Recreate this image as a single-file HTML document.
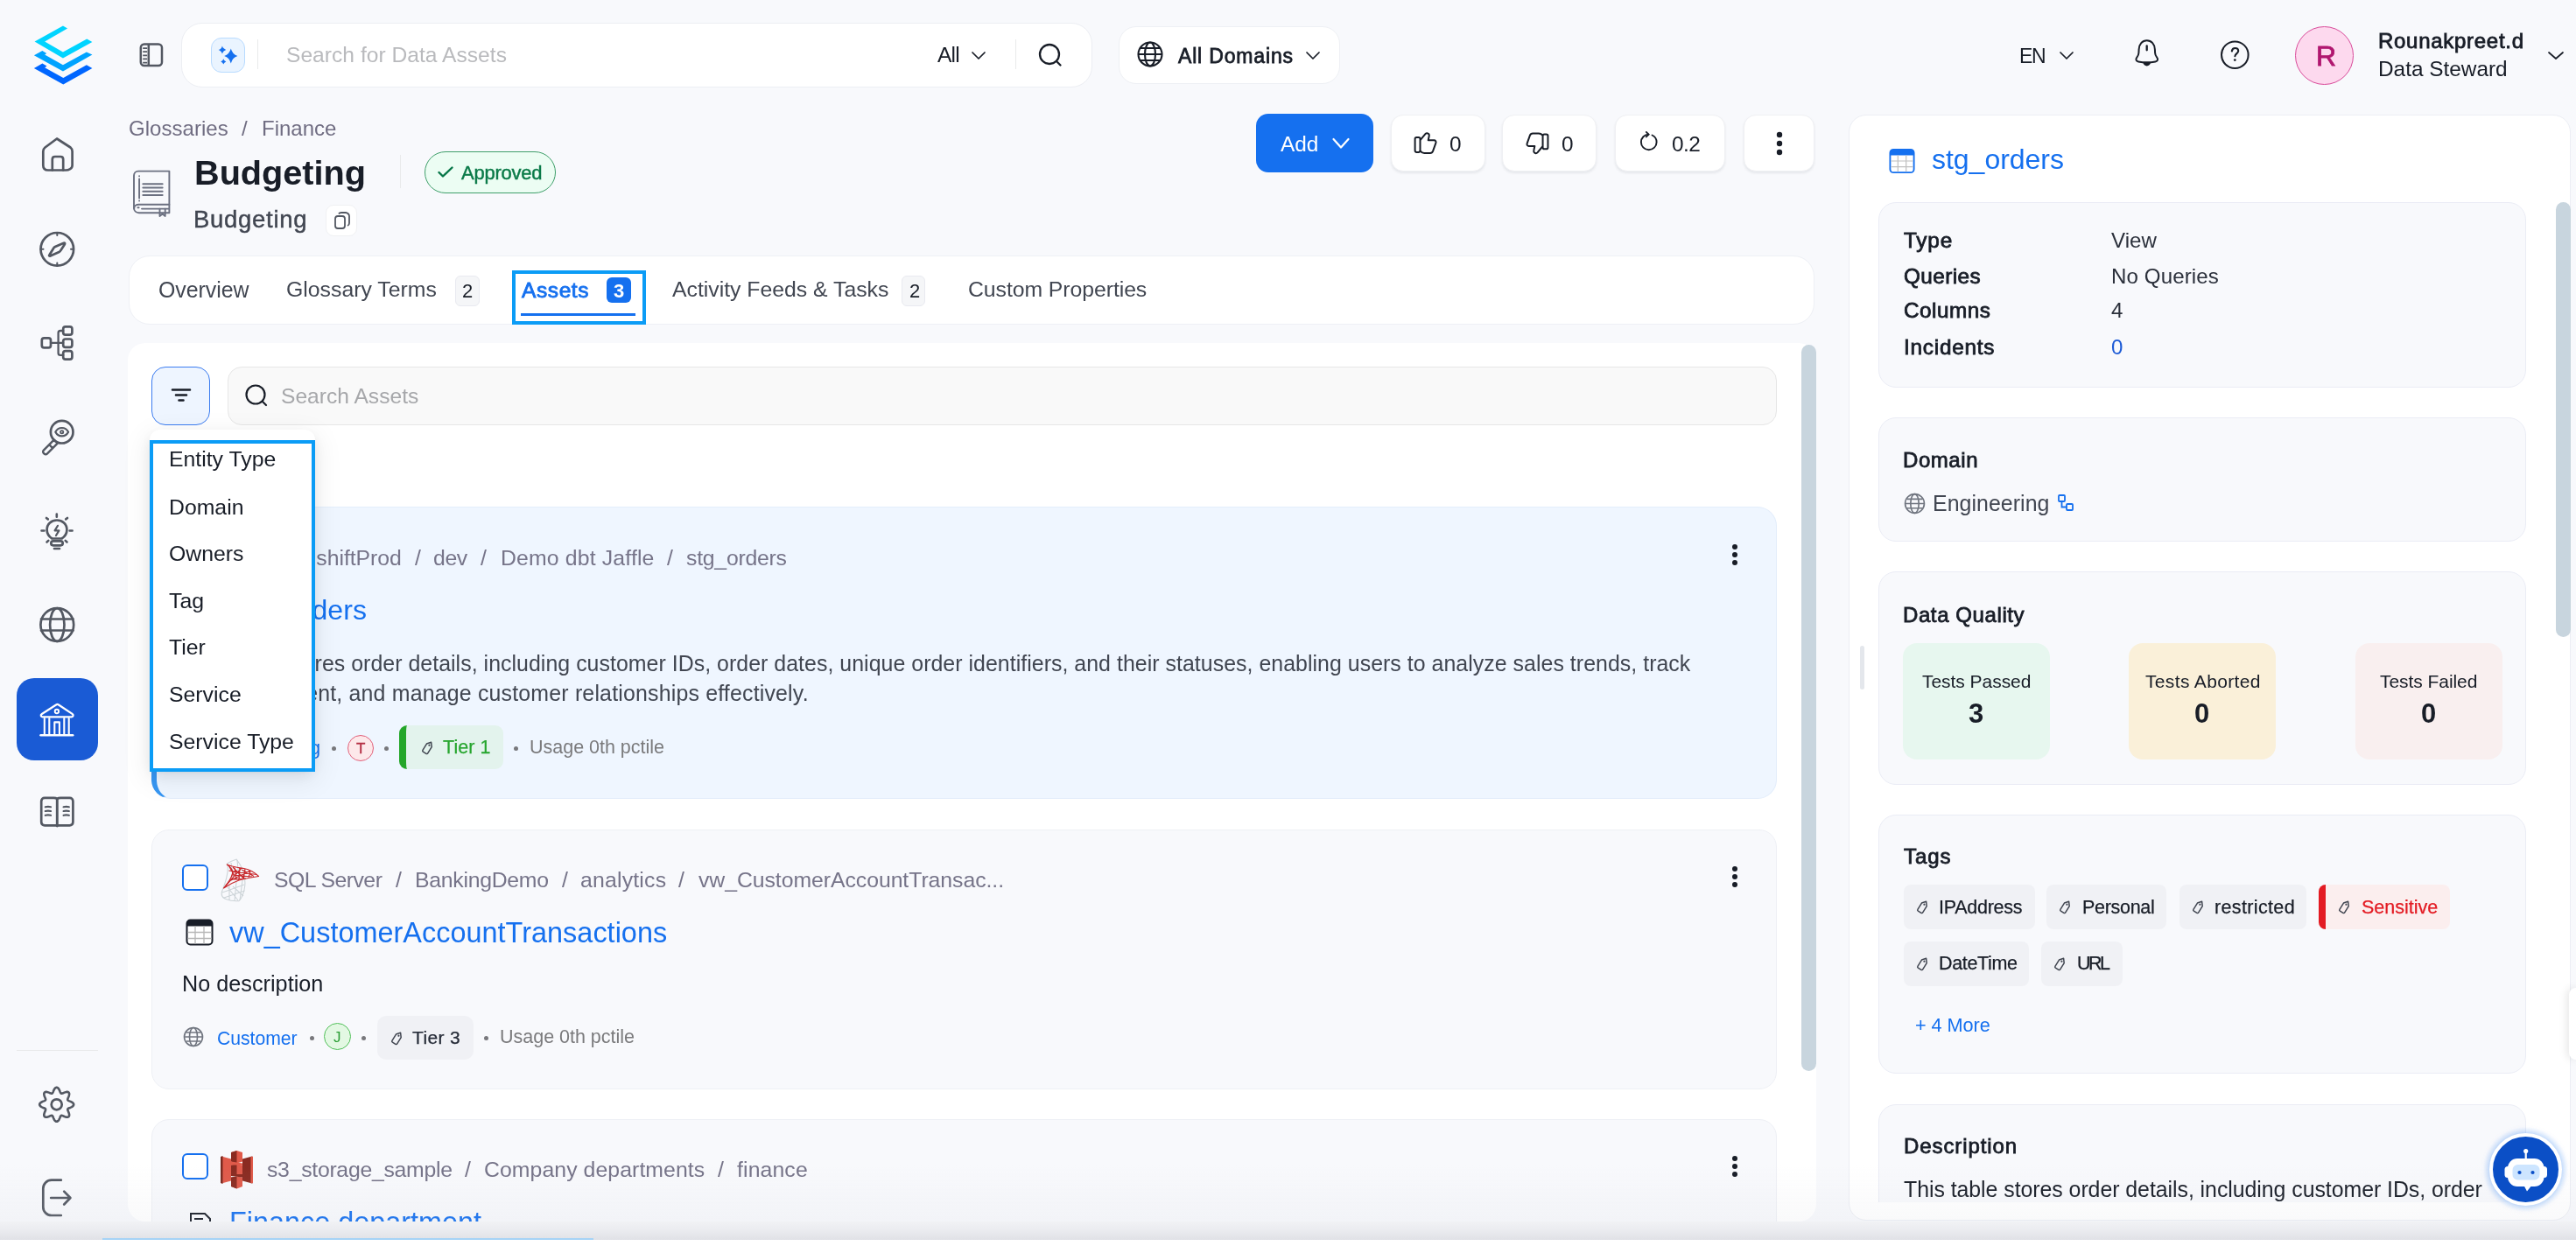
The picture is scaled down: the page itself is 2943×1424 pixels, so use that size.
<!DOCTYPE html>
<html><head><meta charset="utf-8"><title>Budgeting - Glossary</title>
<style>
*{box-sizing:border-box;margin:0;padding:0;}
html,body{width:2943px;height:1424px;overflow:hidden;background:#f8f9fc;font-family:"Liberation Sans",sans-serif;}
.t{position:absolute;white-space:nowrap;will-change:transform;}
.r{position:absolute;}
.s{position:absolute;overflow:visible;}
.clip{position:absolute;overflow:hidden;}
</style></head><body>
<svg class="s" style="left:30px;top:20px;" width="85" height="85" viewBox="30 20 85 85" fill="none">
<path d="M71.95 29.55 L77.07 32.4 L51.15 47.6 L71.95 59.56 L99.24 44.56 L105.4 47.97 L71.95 66.4 L39.55 47.6 Z" fill="#00d4ff"/>
<path d="M38.87 63.3 L48.4 57.9 L53.2 60.9 L51.15 62.6 L71.95 74.2 L98.9 59.56 L105.4 62.6 L71.95 81.4 Z" fill="#00a3ff"/>
<path d="M38.87 78 L48.4 72.5 L53.5 75.6 L51.15 77.3 L72.3 88.9 L98.9 74.2 L105.4 78 L72.3 96.4 Z" fill="#0066ff"/>
</svg>
<svg class="s" style="left:150px;top:40px;" width="45" height="45" viewBox="150 40 45 45" fill="none"><rect x="160.8" y="50.5" width="24.2" height="24.6" rx="4" stroke="#535862" stroke-width="2.5"/><path d="M169.8 50.5 V75" stroke="#535862" stroke-width="2.5"/><path d="M163.2 55.1h5M163.2 59.2h5M163.2 63.3h5M163.2 67.4h5M163.2 71.6h5" stroke="#535862" stroke-width="1.7"/></svg>
<div class="r" style="left:207px;top:26px;width:1041px;height:74px;background:#fff;border:1px solid #eceef3;border-radius:24px;"></div>
<div class="r" style="left:241px;top:43px;width:39px;height:40px;background:#eaf4ff;border:1px solid #b8dbff;border-radius:12px;"></div>
<svg class="s" style="left:245px;top:48px;" width="32" height="30" viewBox="245 48 32 30" fill="none"><path d="M263.8 55.6 Q265.47 62.15 271.40000000000003 64.0 Q265.47 65.85 263.8 72.4 Q262.13 65.85 256.2 64.0 Q262.13 62.15 263.8 55.6Z M253.9 52.4 Q254.85 55.99 258.2 57.0 Q254.85 58.01 253.9 61.6 Q252.95 58.01 249.6 57.0 Q252.95 55.99 253.9 52.4Z M255.3 67.2 Q255.96 69.70 258.3 70.4 Q255.96 71.10 255.3 73.60000000000001 Q254.64 71.10 252.3 70.4 Q254.64 69.70 255.3 67.2Z" fill="#1570ef"/></svg>
<div class="r" style="left:294px;top:45px;width:1px;height:34px;background:#e9eaeb;"></div>
<div class="t" style="left:327.00px;top:51.37px;font-size:24.60px;line-height:24.60px;font-weight:400;color:#b9babd;letter-spacing:0.020px;">Search for Data Assets</div>
<div class="t" style="left:1071.30px;top:51.37px;font-size:24.60px;line-height:24.60px;font-weight:400;color:#181d27;letter-spacing:-0.815px;">All</div>
<svg class="s" style="left:1108px;top:55px;" width="20" height="16" viewBox="0 0 20 16" fill="none"><path d="M3 5 L10.0 12 L17 5" stroke="#181d27" stroke-width="1.7" stroke-linecap="round" stroke-linejoin="round"/></svg>
<div class="r" style="left:1160px;top:45px;width:1px;height:34px;background:#e9eaeb;"></div>
<svg class="s" style="left:1186px;top:49px;" width="30" height="30" viewBox="0 0 30 30" fill="none"><circle cx="13" cy="13" r="11" stroke="#181d27" stroke-width="2.3"/><path d="M22 22 L25.5 25.5" stroke="#181d27" stroke-width="2.3" stroke-linecap="round"/></svg>
<div class="r" style="left:1278px;top:30px;width:253px;height:66px;background:#fff;border:1px solid #eef0f4;border-radius:20px;"></div>
<svg class="s" style="left:1298px;top:46px;" width="32" height="32" viewBox="0 0 32 32" fill="none"><g stroke="#181d27" stroke-width="2.1"><circle cx="16" cy="16" r="13.5"/><ellipse cx="16" cy="16" rx="6" ry="13.5"/><path d="M2.5 16h27M4.5 9h23M4.5 23h23"/></g></svg>
<div class="t" style="left:1346.00px;top:52.73px;font-size:23.00px;line-height:23.00px;font-weight:400;color:#181d27;letter-spacing:0.830px;-webkit-text-stroke:0.78px #181d27;">All Domains</div>
<svg class="s" style="left:1490px;top:55px;" width="20" height="16" viewBox="0 0 20 16" fill="none"><path d="M3 5 L10.0 12 L17 5" stroke="#181d27" stroke-width="1.7" stroke-linecap="round" stroke-linejoin="round"/></svg>
<div class="t" style="left:2307.00px;top:52.73px;font-size:23.00px;line-height:23.00px;font-weight:400;color:#181d27;letter-spacing:-1.447px;">EN</div>
<svg class="s" style="left:2351px;top:55px;" width="20" height="16" viewBox="0 0 20 16" fill="none"><path d="M3 5 L10.0 12 L17 5" stroke="#181d27" stroke-width="1.7" stroke-linecap="round" stroke-linejoin="round"/></svg>
<svg class="s" style="left:2430px;top:40px;" width="45" height="45" viewBox="2430 40 45 45" fill="none"><g stroke="#181d27" stroke-width="2" stroke-linejoin="round" stroke-linecap="round"><path d="M2452.7 46.3 C2447.5 46.3 2443.8 50.5 2443.6 56.5 L2443.4 60.5 C2443.3 62.5 2442.6 64 2441.3 65.6 C2439.5 67.8 2440.5 70 2443 70.4 C2449.5 71.6 2456 71.6 2462.5 70.4 C2465 70 2466 67.8 2464.2 65.6 C2462.9 64 2462.2 62.5 2462.1 60.5 L2461.9 56.5 C2461.7 50.5 2458 46.3 2452.7 46.3Z"/><path d="M2452.7 52.5 V57.3" stroke-width="2.3"/></g><path d="M2448.2 71.6 C2448.8 74 2450.5 75.4 2452.7 75.4 C2454.9 75.4 2456.6 74 2457.2 71.6Z" fill="#181d27"/></svg>
<svg class="s" style="left:2530px;top:40px;" width="48" height="48" viewBox="2530 40 48 48" fill="none"><circle cx="2553.3" cy="62.7" r="15.3" stroke="#181d27" stroke-width="2"/><path d="M2549.8 58.5 C2550.2 56 2551.8 55 2553.5 55 C2555.6 55 2557.2 56.3 2557.2 58.3 C2557.2 60.8 2553.6 61.4 2553.4 64.2" stroke="#181d27" stroke-width="2.1" stroke-linecap="round"/><circle cx="2553.3" cy="68.6" r="1.4" fill="#181d27"/></svg>
<div class="r" style="left:2622px;top:30px;width:67px;height:67px;background:#fdd9ee;border:1.5px solid #d94b9a;border-radius:50%;"></div>
<div class="t" style="left:2646.00px;top:48.31px;font-size:32.00px;line-height:32.00px;font-weight:400;color:#b0176f;letter-spacing:-3.000px;-webkit-text-stroke:0.8px #b0176f;">R</div>
<div class="t" style="left:2717.00px;top:34.88px;font-size:24.00px;line-height:24.00px;font-weight:400;color:#181d27;letter-spacing:0.713px;-webkit-text-stroke:0.82px #181d27;">Rounakpreet.d</div>
<div class="t" style="left:2717.00px;top:66.64px;font-size:24.40px;line-height:24.40px;font-weight:400;color:#181d27;letter-spacing:-0.013px;">Data Steward</div>
<svg class="s" style="left:2909px;top:55px;" width="22" height="16" viewBox="0 0 22 16" fill="none"><path d="M3 5 L11.0 12 L19 5" stroke="#181d27" stroke-width="1.7" stroke-linecap="round" stroke-linejoin="round"/></svg>
<svg class="s" style="left:40px;top:150px;" width="50" height="52" viewBox="40 150 50 52" fill="none"><g stroke="#535862" stroke-width="2.7" stroke-linecap="round" stroke-linejoin="round"><path d="M65 158.5 L51.5 168.5 C50 169.7 49.3 171 49.3 173 V189 C49.3 192.6 51.5 194.5 55 194.5 H75 C78.5 194.5 82.6 192.6 82.6 189 V173 C82.6 171 82 169.7 80.5 168.5 Z"/><path d="M59.8 194.5 V182 C59.8 180 60.8 179 62.8 179 H69.2 C71.2 179 72.2 180 72.2 182 V194.5"/></g></svg>
<svg class="s" style="left:40px;top:260px;" width="50" height="50" viewBox="40 260 50 50" fill="none"><g stroke="#535862" stroke-width="2.7" stroke-linecap="round" stroke-linejoin="round"><circle cx="65.3" cy="284.8" r="18.8"/><path d="M56.5 291.3 C55.5 292 56.5 293 57.5 292.5 L67.5 288 C68.5 287.5 69 287 69.5 286 L74 279 C74.5 278 73.7 277.3 72.8 277.8 L63 282 C62 282.5 61.5 283 61 284 Z"/><path d="M65.3 266v3 M65.3 300.5v3 M46.5 284.8h3 M81 284.8h3" stroke-width="2"/></g></svg>
<svg class="s" style="left:40px;top:365px;" width="50" height="52" viewBox="40 365 50 52" fill="none"><g stroke="#535862" stroke-width="2.7" stroke-linecap="round" stroke-linejoin="round"><rect x="47.8" y="386.3" width="10.2" height="11" rx="2.6"/><rect x="72.2" y="373.3" width="10.2" height="9.4" rx="2.6"/><rect x="72.2" y="387.5" width="10.2" height="9.4" rx="2.6"/><rect x="72.2" y="401.2" width="10.2" height="9.4" rx="2.6"/><path d="M58 391.8 H72.2 M72.2 378 H69 C67.5 378 66.6 379 66.6 380.5 V403.5 C66.6 405 67.5 405.9 69 405.9 H72.2" stroke-width="2.3"/></g></svg>
<svg class="s" style="left:40px;top:475px;" width="50" height="50" viewBox="40 475 50 50" fill="none"><g stroke="#535862" stroke-width="2.7" stroke-linecap="round" stroke-linejoin="round"><circle cx="70.7" cy="493.7" r="12.8"/><path d="M63.3 493.7 C65 490.6 67.7 489 70.7 489 C73.7 489 76.4 490.6 78.1 493.7 C76.4 496.8 73.7 498.4 70.7 498.4 C67.7 498.4 65 496.8 63.3 493.7Z" stroke-width="2.2"/><circle cx="70.7" cy="493.7" r="1.6" stroke-width="1.8"/><path d="M61.7 502.7 L49.8 514.6 C48.9 515.5 48.9 516.9 49.8 517.8 L50.6 518.6 C51.5 519.5 52.9 519.5 53.8 518.6 L65.7 506.7 Z M56.2 508.2 L60.2 512.2" stroke-width="2.4"/></g></svg>
<svg class="s" style="left:40px;top:580px;" width="50" height="55" viewBox="40 580 50 55" fill="none"><g stroke="#535862" stroke-width="2.7" stroke-linecap="round" stroke-linejoin="round"><path d="M59.5 615.5 C55.5 613 53.6 609.5 53.6 605.5 C53.6 598.6 58.8 594.5 65 594.5 C71.2 594.5 76.4 598.6 76.4 605.5 C76.4 609.5 74.5 613 70.5 615.5 Z"/><rect x="58.3" y="618.3" width="13.4" height="5" rx="2.5"/><path d="M62 627 H68"/><path d="M66 600.8 L62.6 606.4 H67.4 L64 612" stroke-width="2.2"/><path d="M64.8 587.5v3.2 M53 592l1.8 1.4 M77 592l-1.8 1.4 M47.5 606.5h3 M79.6 606.5h3 M53.5 619.5l1.8-1.6 M76.5 619.5l-1.8-1.6" stroke-width="2.6"/></g></svg>
<svg class="s" style="left:40px;top:688px;" width="50" height="50" viewBox="40 688 50 50" fill="none"><g stroke="#535862" stroke-width="2.7" stroke-linecap="round" stroke-linejoin="round"><circle cx="65.3" cy="714" r="18.9"/><ellipse cx="65.3" cy="714" rx="8.2" ry="18.9"/><path d="M47 707.5 H83.6 M47 720.5 H83.6"/></g></svg>
<div class="r" style="left:19px;top:775px;width:93px;height:94px;background:#1a5bd5;border-radius:20px;"></div>
<svg class="s" style="left:40px;top:798px;" width="50" height="48" viewBox="40 798 50 48" fill="none"><g stroke="#fff" stroke-width="2.3" stroke-linecap="round" stroke-linejoin="round"><path d="M48.6 819.3 C46.6 819.3 46 817 47.8 815.9 L64.5 805.2 C65.2 804.7 65.9 804.7 66.6 805.2 L82.6 815.9 C84.3 817 83.7 819.3 81.8 819.3 Z"/><circle cx="64.9" cy="813" r="2.2" stroke-width="1.9"/><path d="M46.5 840.2 H83.2" stroke-width="2.5"/><path d="M50.8 821 V838.8 M56.3 821 V838.8 M73.3 821 V838.8 M78.7 821 V838.8 M62.3 838.8 V825.4 H67.9 V838.8" stroke-width="2.1"/></g></svg>
<svg class="s" style="left:40px;top:905px;" width="50" height="45" viewBox="40 905 50 45" fill="none"><g stroke="#535862" stroke-width="2.7" stroke-linecap="round" stroke-linejoin="round"><path d="M65.3 913 C64 912 62.6 911.9 61.5 911.9 H51 C48.8 911.9 47.2 913.5 47.2 915.7 V939.5 C47.2 941.7 48.8 943.3 51 943.3 H65.3 H79.6 C81.8 943.3 83.4 941.7 83.4 939.5 V915.7 C83.4 913.5 81.8 911.9 79.6 911.9 H69.1 C68 911.9 66.6 912 65.3 913 Z"/><path d="M65.3 913 V944" stroke-width="2.9"/><path d="M51.8 922.2 C53.8 921.7 56 921.7 58 922.2 M51.8 927 C53.8 926.5 56 926.5 58 927 M51.8 931.8 C53.8 931.3 56 931.3 58 931.8 M72.6 922.2 C74.6 921.7 76.8 921.7 78.8 922.2 M72.6 927 C74.6 926.5 76.8 926.5 78.8 927 M72.6 931.8 C74.6 931.3 76.8 931.3 78.8 931.8" stroke-width="2.2"/></g></svg>
<div class="r" style="left:19px;top:1200px;width:93px;height:1px;background:#e9eaeb;"></div>
<svg class="s" style="left:40px;top:1238px;" width="50" height="50" viewBox="40 1238 50 50" fill="none"><g stroke="#535862" stroke-width="2.7" stroke-linecap="round" stroke-linejoin="round"><path d="M64.70 1242.80 L65.21 1242.87 L65.71 1243.08 L66.19 1243.41 L66.64 1243.86 L67.06 1244.40 L67.44 1245.02 L67.78 1245.68 L68.09 1246.36 L68.37 1247.03 L68.62 1247.67 L68.86 1248.24 L69.10 1248.74 L69.36 1249.15 L69.63 1249.45 L69.94 1249.64 L70.30 1249.73 L70.71 1249.71 L71.17 1249.60 L71.69 1249.42 L72.28 1249.18 L72.91 1248.91 L73.58 1248.63 L74.27 1248.37 L74.98 1248.15 L75.69 1247.98 L76.37 1247.89 L77.00 1247.89 L77.58 1247.99 L78.08 1248.20 L78.49 1248.51 L78.80 1248.92 L79.01 1249.42 L79.11 1250.00 L79.11 1250.63 L79.02 1251.31 L78.85 1252.02 L78.63 1252.73 L78.37 1253.42 L78.09 1254.09 L77.82 1254.72 L77.58 1255.31 L77.40 1255.83 L77.29 1256.29 L77.27 1256.70 L77.36 1257.06 L77.55 1257.37 L77.85 1257.64 L78.26 1257.90 L78.76 1258.14 L79.33 1258.38 L79.97 1258.63 L80.64 1258.91 L81.32 1259.22 L81.98 1259.56 L82.60 1259.94 L83.14 1260.36 L83.59 1260.81 L83.92 1261.29 L84.13 1261.79 L84.20 1262.30 L84.13 1262.81 L83.92 1263.31 L83.59 1263.79 L83.14 1264.24 L82.60 1264.66 L81.98 1265.04 L81.32 1265.38 L80.64 1265.69 L79.97 1265.97 L79.33 1266.22 L78.76 1266.46 L78.26 1266.70 L77.85 1266.96 L77.55 1267.23 L77.36 1267.54 L77.27 1267.90 L77.29 1268.31 L77.40 1268.77 L77.58 1269.29 L77.82 1269.88 L78.09 1270.51 L78.37 1271.18 L78.63 1271.87 L78.85 1272.58 L79.02 1273.29 L79.11 1273.97 L79.11 1274.60 L79.01 1275.18 L78.80 1275.68 L78.49 1276.09 L78.08 1276.40 L77.58 1276.61 L77.00 1276.71 L76.37 1276.71 L75.69 1276.62 L74.98 1276.45 L74.27 1276.23 L73.58 1275.97 L72.91 1275.69 L72.28 1275.42 L71.69 1275.18 L71.17 1275.00 L70.71 1274.89 L70.30 1274.87 L69.94 1274.96 L69.63 1275.15 L69.36 1275.45 L69.10 1275.86 L68.86 1276.36 L68.62 1276.93 L68.37 1277.57 L68.09 1278.24 L67.78 1278.92 L67.44 1279.58 L67.06 1280.20 L66.64 1280.74 L66.19 1281.19 L65.71 1281.52 L65.21 1281.73 L64.70 1281.80 L64.19 1281.73 L63.69 1281.52 L63.21 1281.19 L62.76 1280.74 L62.34 1280.20 L61.96 1279.58 L61.62 1278.92 L61.31 1278.24 L61.03 1277.57 L60.78 1276.93 L60.54 1276.36 L60.30 1275.86 L60.04 1275.45 L59.77 1275.15 L59.46 1274.96 L59.10 1274.87 L58.69 1274.89 L58.23 1275.00 L57.71 1275.18 L57.13 1275.42 L56.49 1275.69 L55.82 1275.97 L55.13 1276.23 L54.42 1276.45 L53.71 1276.62 L53.03 1276.71 L52.40 1276.71 L51.82 1276.61 L51.32 1276.40 L50.91 1276.09 L50.60 1275.68 L50.39 1275.18 L50.29 1274.60 L50.29 1273.97 L50.38 1273.29 L50.55 1272.58 L50.77 1271.87 L51.03 1271.18 L51.31 1270.51 L51.58 1269.88 L51.82 1269.29 L52.00 1268.77 L52.11 1268.31 L52.13 1267.90 L52.04 1267.54 L51.85 1267.23 L51.55 1266.96 L51.14 1266.70 L50.64 1266.46 L50.07 1266.22 L49.43 1265.97 L48.76 1265.69 L48.08 1265.38 L47.42 1265.04 L46.80 1264.66 L46.26 1264.24 L45.81 1263.79 L45.48 1263.31 L45.27 1262.81 L45.20 1262.30 L45.27 1261.79 L45.48 1261.29 L45.81 1260.81 L46.26 1260.36 L46.80 1259.94 L47.42 1259.56 L48.08 1259.22 L48.76 1258.91 L49.43 1258.63 L50.07 1258.38 L50.64 1258.14 L51.14 1257.90 L51.55 1257.64 L51.85 1257.37 L52.04 1257.06 L52.13 1256.70 L52.11 1256.29 L52.00 1255.83 L51.82 1255.31 L51.58 1254.72 L51.31 1254.09 L51.03 1253.42 L50.77 1252.73 L50.55 1252.02 L50.38 1251.31 L50.29 1250.63 L50.29 1250.00 L50.39 1249.42 L50.60 1248.92 L50.91 1248.51 L51.32 1248.20 L51.82 1247.99 L52.40 1247.89 L53.03 1247.89 L53.71 1247.98 L54.42 1248.15 L55.13 1248.37 L55.82 1248.63 L56.49 1248.91 L57.13 1249.18 L57.71 1249.42 L58.23 1249.60 L58.69 1249.71 L59.10 1249.73 L59.46 1249.64 L59.77 1249.45 L60.04 1249.15 L60.30 1248.74 L60.54 1248.24 L60.78 1247.67 L61.03 1247.03 L61.31 1246.36 L61.62 1245.68 L61.96 1245.02 L62.34 1244.40 L62.76 1243.86 L63.21 1243.41 L63.69 1243.08 L64.19 1242.87Z" stroke-width="2.6"/><circle cx="64.7" cy="1262.3" r="6"/></g></svg>
<svg class="s" style="left:40px;top:1340px;" width="50" height="55" viewBox="40 1340 50 55" fill="none"><g stroke="#535862" stroke-width="2.7" stroke-linecap="round" stroke-linejoin="round"><path d="M69.8 1348.7 H58.9 C53.6 1348.7 49.3 1353 49.3 1358.3 V1379.4 C49.3 1384.7 53.6 1389 58.9 1389 H69.8"/><path d="M58.2 1369 H80.2 M73.2 1361.6 L80.4 1369 L73.2 1376.5"/></g></svg>
<div class="t" style="left:147.40px;top:134.98px;font-size:24.00px;line-height:24.00px;font-weight:400;color:#706d82;letter-spacing:0.036px;">Glossaries</div>
<div class="t" style="left:276.40px;top:134.98px;font-size:24.00px;line-height:24.00px;font-weight:400;color:#706d82;letter-spacing:0.128px;">/</div>
<div class="t" style="left:299.20px;top:134.98px;font-size:24.00px;line-height:24.00px;font-weight:400;color:#706d82;letter-spacing:0.001px;">Finance</div>
<svg class="s" style="left:145px;top:185px;" width="60" height="68" viewBox="145 185 60 68" fill="none"><g stroke="#6b7080" stroke-width="1.9" stroke-linejoin="round" stroke-linecap="round" fill="none"><path d="M193.4 195.6 H158 C155 195.6 153 197.8 153 200.8 V237.5 C153 241 155.4 243.2 158.8 243.2 H193.4 Z"/><path d="M193.4 233.8 H158.6 C155.6 233.8 153.2 235.6 153.2 238.2"/><path d="M159.1 201.2 V201.3 M159.1 204.5 V226.5 M159.1 229.5 V229.6"/><path d="M163.4 210.2 H185.6 M163.4 214.5 H185.6 M163.4 218.8 H185.6 M163.4 223 H185.6" stroke-width="2.1"/><path d="M157.4 237.3 H158.6 M162 238.6 H193"/><path d="M182.5 238.6 V247 L185.6 244.5 L188.7 247 V238.6"/></g></svg>
<div class="t" style="left:222.00px;top:177.59px;font-size:39.70px;line-height:39.70px;font-weight:700;color:#181d27;letter-spacing:-0.030px;">Budgeting</div>
<div class="r" style="left:457px;top:177px;width:1px;height:38px;background:#e9eaeb;"></div>
<div class="r" style="left:485px;top:173px;width:150px;height:48px;background:#ecfdf3;border:1.5px solid #3f9f6a;border-radius:24px;"></div>
<svg class="s" style="left:499px;top:189px;" width="20" height="16" viewBox="0 0 20 16" fill="none"><path d="M2.5 8 L7 12.5 L17.5 2.5" stroke="#067647" stroke-width="2.4" stroke-linecap="round" stroke-linejoin="round"/></svg>
<div class="t" style="left:527.00px;top:186.87px;font-size:22.00px;line-height:22.00px;font-weight:400;color:#0a7a48;letter-spacing:-0.226px;-webkit-text-stroke:0.45px #0a7a48;">Approved</div>
<div class="t" style="left:221.00px;top:236.92px;font-size:27.50px;line-height:27.50px;font-weight:400;color:#414651;letter-spacing:0.718px;-webkit-text-stroke:0.45px #414651;">Budgeting</div>
<div class="r" style="left:372px;top:234px;width:36px;height:36px;background:#fff;border:1px solid #f0f1f3;border-radius:9px;"></div>
<svg class="s" style="left:380px;top:241px;" width="22" height="22" viewBox="0 0 22 22" fill="none"><g stroke="#535862" stroke-width="1.8"><rect x="3" y="6" width="11" height="14" rx="3"/><path d="M7 3.5 C7.5 2.5 8.5 2 10 2 H15 C17 2 19 4 19 6 V14 C19 15.5 18.5 16.5 17 17"/></g></svg>
<div class="r" style="left:1435px;top:130px;width:134px;height:67px;background:#1570ef;border-radius:14px;"></div>
<div class="t" style="left:1462.60px;top:152.74px;font-size:24.40px;line-height:24.40px;font-weight:400;color:#fff;letter-spacing:-0.004px;">Add</div>
<svg class="s" style="left:1519px;top:154px;" width="26" height="20" viewBox="0 0 26 20" fill="none"><path d="M4.5 5 L13 14.5 L21.5 5" stroke="#fff" stroke-width="2.2" stroke-linecap="round" stroke-linejoin="round"/></svg>
<div class="r" style="left:1589px;top:131px;width:108px;height:65px;background:#fff;border:1px solid #eff0f3;border-radius:14px;box-shadow:0 2px 3px rgba(16,24,40,0.08);"></div>
<div class="r" style="left:1716px;top:131px;width:108px;height:65px;background:#fff;border:1px solid #eff0f3;border-radius:14px;box-shadow:0 2px 3px rgba(16,24,40,0.08);"></div>
<div class="r" style="left:1845px;top:131px;width:126px;height:65px;background:#fff;border:1px solid #eff0f3;border-radius:14px;box-shadow:0 2px 3px rgba(16,24,40,0.08);"></div>
<div class="r" style="left:1992px;top:131px;width:81px;height:65px;background:#fff;border:1px solid #eff0f3;border-radius:14px;box-shadow:0 2px 3px rgba(16,24,40,0.08);"></div>
<svg class="s" style="left:1610px;top:145px;" width="36" height="36" viewBox="1610 145 36 36" fill="none"><g stroke="#181d27" stroke-width="2" stroke-linejoin="round"><rect x="1616.6" y="157" width="5.9" height="16.9" rx="1.8"/><path d="M1622.8 159.8 L1628.6 152.9 C1629.6 151.8 1631.4 151.9 1632.3 153.1 C1632.8 153.8 1632.9 154.7 1632.7 155.5 L1631.7 160.3 H1638.4 C1640 160.3 1641 161.9 1640.4 163.4 L1637.1 172.7 C1636.6 174 1635.4 174.9 1634 174.9 H1627.2 C1625.2 174.9 1623.6 174 1622.8 172.4"/></g></svg>
<div class="t" style="left:1655.90px;top:152.74px;font-size:24.40px;line-height:24.40px;font-weight:400;color:#181d27;letter-spacing:-1.466px;">0</div>
<svg class="s" style="left:1738px;top:145px;" width="36" height="36" viewBox="1738 145 36 36" fill="none"><g stroke="#181d27" stroke-width="2" stroke-linejoin="round" transform="translate(128.25 0.2) rotate(180 1628.4 163.55)"><rect x="1616.6" y="157" width="5.9" height="16.9" rx="1.8"/><path d="M1622.8 159.8 L1628.6 152.9 C1629.6 151.8 1631.4 151.9 1632.3 153.1 C1632.8 153.8 1632.9 154.7 1632.7 155.5 L1631.7 160.3 H1638.4 C1640 160.3 1641 161.9 1640.4 163.4 L1637.1 172.7 C1636.6 174 1635.4 174.9 1634 174.9 H1627.2 C1625.2 174.9 1623.6 174 1622.8 172.4"/></g></svg>
<div class="t" style="left:1783.60px;top:152.74px;font-size:24.40px;line-height:24.40px;font-weight:400;color:#181d27;letter-spacing:-0.666px;">0</div>
<svg class="s" style="left:1870px;top:148px;" width="28" height="28" viewBox="1870 148 28 28" fill="none"><g stroke="#181d27" stroke-width="1.9" stroke-linecap="round" stroke-linejoin="round"><path d="M1887.5 154.5 C1890.6 155.9 1892.6 158.9 1892.6 162.4 C1892.6 167.3 1888.6 171.2 1883.7 171.2 C1878.8 171.2 1874.9 167.3 1874.9 162.4 C1874.9 157.6 1878.7 153.7 1883.5 153.6"/><path d="M1880.8 150.9 L1883.6 153.6 L1880.8 156.4"/></g></svg>
<div class="t" style="left:1909.80px;top:152.74px;font-size:24.40px;line-height:24.40px;font-weight:400;color:#181d27;letter-spacing:-0.608px;">0.2</div>
<svg class="s" style="left:2025px;top:150px;" width="16" height="28" viewBox="0 0 16 28" fill="none"><circle cx="8" cy="4" r="3.2" fill="#181d27"/><circle cx="8" cy="14" r="3.2" fill="#181d27"/><circle cx="8" cy="24" r="3.2" fill="#181d27"/></svg>
<div class="r" style="left:147px;top:292px;width:1926px;height:79px;background:#fff;border:1px solid #eef0f5;border-radius:24px;"></div>
<div class="t" style="left:181.40px;top:319.22px;font-size:24.90px;line-height:24.90px;font-weight:400;color:#414651;letter-spacing:-0.033px;">Overview</div>
<div class="t" style="left:326.80px;top:319.30px;font-size:24.80px;line-height:24.80px;font-weight:400;color:#414651;letter-spacing:0.001px;">Glossary Terms</div>
<div class="r" style="left:520px;top:315px;width:28px;height:35px;background:#f5f6f8;border:1px solid #e9eaf0;border-radius:6px;"></div>
<div class="t" style="left:528.00px;top:321.67px;font-size:22.00px;line-height:22.00px;font-weight:400;color:#181d27;letter-spacing:-1.232px;">2</div>
<div class="t" style="left:595.50px;top:319.56px;font-size:24.50px;line-height:24.50px;font-weight:400;color:#1570ef;letter-spacing:0.595px;-webkit-text-stroke:0.83px #1570ef;">Assets</div>
<div class="r" style="left:693px;top:317px;width:28px;height:29px;background:#1570ef;border-radius:6px;"></div>
<div class="t" style="left:700.80px;top:321.67px;font-size:22.00px;line-height:22.00px;font-weight:700;color:#fff;letter-spacing:0.268px;">3</div>
<div class="r" style="left:595px;top:357.8px;width:131px;height:3.2px;background:#1570ef;"></div>
<div class="r" style="left:585px;top:308.8px;width:153px;height:62px;border:4px solid #0b9cf6;"></div>
<div class="t" style="left:767.50px;top:319.30px;font-size:24.80px;line-height:24.80px;font-weight:400;color:#414651;letter-spacing:-0.011px;">Activity Feeds &amp; Tasks</div>
<div class="r" style="left:1029.5px;top:315px;width:27px;height:35px;background:#f5f6f8;border:1px solid #e9eaf0;border-radius:6px;"></div>
<div class="t" style="left:1038.90px;top:321.67px;font-size:22.00px;line-height:22.00px;font-weight:400;color:#181d27;letter-spacing:-2.532px;">2</div>
<div class="t" style="left:1105.70px;top:319.30px;font-size:24.80px;line-height:24.80px;font-weight:400;color:#414651;letter-spacing:-0.067px;">Custom Properties</div>
<div class="clip" style="left:0;top:0;width:2075px;height:1396px;">
<div class="r" style="left:146px;top:392px;width:1929px;height:1004px;background:#fff;border-radius:20px;"></div>
<div class="r" style="left:2058px;top:394px;width:17px;height:830px;background:#c8d5de;border-radius:9px;"></div>
<div class="r" style="left:173px;top:419px;width:67px;height:67px;background:#eef5ff;border:1.5px solid #3b7cf0;border-radius:16px;"></div>
<svg class="s" style="left:193px;top:441px;" width="28" height="22" viewBox="0 0 28 22" fill="none"><path d="M4 4.5 H24 M8 10.5 H20 M11.5 16.5 H16.5" stroke="#181d27" stroke-width="2.6" stroke-linecap="round"/></svg>
<div class="r" style="left:260px;top:419px;width:1770px;height:67px;background:#f9f9f9;border:1px solid #e6e6e6;border-radius:16px;"></div>
<svg class="s" style="left:279px;top:438px;" width="30" height="30" viewBox="0 0 30 30" fill="none"><circle cx="13" cy="13" r="10.5" stroke="#181d27" stroke-width="2.2"/><path d="M21 21 L25 25" stroke="#181d27" stroke-width="2.2" stroke-linecap="round"/></svg>
<div class="t" style="left:321.00px;top:441.07px;font-size:24.60px;line-height:24.60px;font-weight:400;color:#a6a7aa;letter-spacing:0.005px;">Search Assets</div>
<div class="r" style="left:173px;top:579px;width:1857px;height:334px;background:#eff6ff;border:1px solid #e3edfb;border-left:6px solid #3796f2;border-radius:22px;"></div>
<div class="r" style="left:211px;top:618px;width:30px;height:30px;background:#fff;border:2.8px solid #1570ef;border-radius:6px;"></div>
<svg class="s" style="left:0;top:0" width="400" height="1100" viewBox="0 0 400 1100" fill="none"><g transform="translate(3 -370)"><g stroke="#cdd4d8" stroke-width="1.1" fill="none" stroke-linejoin="round"><path d="M270.2 982.1 C266 983.5 262 985.5 259.6 987 C262 996 258 1008 253.5 1019 C252.5 1023 254 1026 258 1027.5 C263 1029.5 268 1030 273 1029.6 C276.5 1026 279 1020 279.8 1012 C280.5 1003 278 992 270.2 982.1Z"/><path d="M254 1020 L279 1011 M256 1026 L279.5 1018 M262 1029 L262 1012 M268 1029.5 L270 1008 M274 1029 L277 1006 M260 1014 L272 1029 M266 1013 L278 1024 M271 983 L273 1004 M264 986 L266 1002"/></g>
<g stroke="#c8282c" stroke-width="1.25" fill="none" stroke-linejoin="round"><path d="M259.3 988 C266 991 272 991.5 278.7 992.5 C286 994 291.5 997.5 295.5 1001.5 C288 1002.5 280 1004 273 1006 C266 1008.5 260.5 1011.5 255.6 1015 C261 1009 264.5 1003 265.7 998 C266.2 994.5 263.5 991 259.3 988Z"/><path d="M262 990.5 L268 1001 M268 991.5 L270 1004.5 M274 992 L273 1006 M280 993 L278 1004.5 M286 995.5 L284 1003 M261.5 995 L293 999.5 M265.5 1000 L288 1002 M262 1007 L286 995 M258 1012 L276 992 M266 991 L279 1004.5 M273 992 L290 1001.5 M264 1005 L281 1004"/></g></g></svg>
<div class="t" style="left:315.60px;top:626.00px;font-size:24.80px;line-height:24.80px;font-weight:400;color:#767489;letter-spacing:-0.052px;">RedshiftProd</div>
<div class="t" style="left:473.50px;top:626.00px;font-size:24.80px;line-height:24.80px;font-weight:400;color:#767489;letter-spacing:-0.394px;">/</div>
<div class="t" style="left:495.30px;top:626.00px;font-size:24.80px;line-height:24.80px;font-weight:400;color:#767489;letter-spacing:-0.389px;">dev</div>
<div class="t" style="left:549.00px;top:626.00px;font-size:24.80px;line-height:24.80px;font-weight:400;color:#767489;letter-spacing:-0.494px;">/</div>
<div class="t" style="left:572.00px;top:626.00px;font-size:24.80px;line-height:24.80px;font-weight:400;color:#767489;letter-spacing:0.155px;">Demo dbt Jaffle</div>
<div class="t" style="left:761.50px;top:626.00px;font-size:24.80px;line-height:24.80px;font-weight:400;color:#767489;letter-spacing:0.106px;">/</div>
<div class="t" style="left:784.00px;top:626.00px;font-size:24.80px;line-height:24.80px;font-weight:400;color:#767489;letter-spacing:-0.242px;">stg_orders</div>
<svg class="s" style="left:1976px;top:621px;" width="12" height="26" viewBox="0 0 12 26" fill="none"><circle cx="6" cy="4" r="3" fill="#181d27"/><circle cx="6" cy="13" r="3" fill="#181d27"/><circle cx="6" cy="22" r="3" fill="#181d27"/></svg>
<svg class="s" style="left:215px;top:682px;" width="32" height="31" viewBox="0 0 32 31" fill="none"><rect x="1.5" y="1.5" width="29" height="28" rx="4" fill="#fff" stroke="#181d27" stroke-width="2"/><path d="M1.5 5.5 C1.5 3 3 1.5 5.5 1.5 H26.5 C29 1.5 30.5 3 30.5 5.5 V8.5 H1.5Z" fill="#181d27"/><path d="M2.5 15.5 H29.5 M2.5 22.5 H29.5 M11 8.5 V28.5 M21 8.5 V28.5" stroke="#b7b7b7" stroke-width="1.3"/></svg>
<div class="t" style="left:267.00px;top:680.91px;font-size:32.00px;line-height:32.00px;font-weight:400;color:#1570ef;letter-spacing:0.089px;">stg_orders</div>
<div class="t" style="left:211.00px;top:745.92px;font-size:24.90px;line-height:24.90px;font-weight:400;color:#414651;letter-spacing:0.038px;">This table stores order details, including customer IDs, order dates, unique order identifiers, and their statuses, enabling users to analyze sales trends, track</div>
<div class="t" style="left:211.00px;top:779.92px;font-size:24.90px;line-height:24.90px;font-weight:400;color:#414651;letter-spacing:0.188px;">order fulfillment, and manage customer relationships effectively.</div>
<svg class="s" style="left:212px;top:838px;" width="24" height="24" viewBox="0 0 24 24" fill="none"><g stroke="#717680" stroke-width="1.6"><circle cx="12" cy="12" r="10.5"/><ellipse cx="12" cy="12" rx="4.5" ry="10.5"/><path d="M1.5 12h21M3.5 7h17M3.5 17h17"/></g></svg>
<div class="t" style="left:251.00px;top:844.05px;font-size:21.20px;line-height:21.20px;font-weight:400;color:#1570ef;letter-spacing:0.186px;">Engineering</div>
<div class="r" style="left:379.0px;top:852.5px;width:5px;height:5px;background:#78787c;border-radius:50%;"></div>
<div class="r" style="left:397px;top:840px;width:30px;height:30px;background:#fde8ea;border:1.5px solid #e0607a;border-radius:50%;"></div>
<div class="t" style="left:406.81px;top:846.61px;font-size:17.00px;line-height:17.00px;font-weight:400;color:#b42e43;letter-spacing:0.000px;-webkit-text-stroke:0.4px #b42e43;">T</div>
<div class="r" style="left:439.0px;top:852.5px;width:5px;height:5px;background:#78787c;border-radius:50%;"></div>
<div class="r" style="left:456px;top:829px;width:119px;height:50px;background:#e3f3ed;border-left:8px solid #24a629;border-radius:9px;"></div>
<svg class="s" style="left:481px;top:845px;" width="16.0" height="18.0" viewBox="0 0 16 18" fill="none"><g transform="rotate(32 8 9)" stroke="#414651" stroke-width="1.5" stroke-linejoin="round"><path d="M4.6 6.5 L8 2.2 L11.4 6.5 V15 C11.4 15.8 10.9 16.3 10.1 16.3 H5.9 C5.1 16.3 4.6 15.8 4.6 15 Z"/><circle cx="8" cy="6.3" r="1.1" fill="#414651" stroke="none"/></g></svg>
<div class="t" style="left:505.60px;top:843.80px;font-size:21.50px;line-height:21.50px;font-weight:400;color:#27a52f;letter-spacing:0.048px;-webkit-text-stroke:0.25px currentColor;">Tier 1</div>
<div class="r" style="left:587.2px;top:852.5px;width:5px;height:5px;background:#78787c;border-radius:50%;"></div>
<div class="t" style="left:605.00px;top:843.80px;font-size:21.50px;line-height:21.50px;font-weight:400;color:#7a7a7c;letter-spacing:-0.012px;">Usage 0th pctile</div>
<div class="r" style="left:173px;top:948px;width:1857px;height:297px;background:#f8f9fc;border:1px solid #eef0f5;border-radius:20px;"></div>
<div class="r" style="left:208px;top:988px;width:30px;height:30px;background:#fff;border:2.8px solid #1570ef;border-radius:6px;"></div>
<svg class="s" style="left:0;top:0" width="400" height="1100" viewBox="0 0 400 1100" fill="none"><g transform="translate(0 0)"><g stroke="#cdd4d8" stroke-width="1.1" fill="none" stroke-linejoin="round"><path d="M270.2 982.1 C266 983.5 262 985.5 259.6 987 C262 996 258 1008 253.5 1019 C252.5 1023 254 1026 258 1027.5 C263 1029.5 268 1030 273 1029.6 C276.5 1026 279 1020 279.8 1012 C280.5 1003 278 992 270.2 982.1Z"/><path d="M254 1020 L279 1011 M256 1026 L279.5 1018 M262 1029 L262 1012 M268 1029.5 L270 1008 M274 1029 L277 1006 M260 1014 L272 1029 M266 1013 L278 1024 M271 983 L273 1004 M264 986 L266 1002"/></g>
<g stroke="#c8282c" stroke-width="1.25" fill="none" stroke-linejoin="round"><path d="M259.3 988 C266 991 272 991.5 278.7 992.5 C286 994 291.5 997.5 295.5 1001.5 C288 1002.5 280 1004 273 1006 C266 1008.5 260.5 1011.5 255.6 1015 C261 1009 264.5 1003 265.7 998 C266.2 994.5 263.5 991 259.3 988Z"/><path d="M262 990.5 L268 1001 M268 991.5 L270 1004.5 M274 992 L273 1006 M280 993 L278 1004.5 M286 995.5 L284 1003 M261.5 995 L293 999.5 M265.5 1000 L288 1002 M262 1007 L286 995 M258 1012 L276 992 M266 991 L279 1004.5 M273 992 L290 1001.5 M264 1005 L281 1004"/></g></g></svg>
<div class="t" style="left:312.60px;top:993.70px;font-size:24.80px;line-height:24.80px;font-weight:400;color:#767489;letter-spacing:-0.526px;">SQL Server</div>
<div class="t" style="left:451.50px;top:993.70px;font-size:24.80px;line-height:24.80px;font-weight:400;color:#767489;letter-spacing:0.306px;">/</div>
<div class="t" style="left:474.00px;top:993.70px;font-size:24.80px;line-height:24.80px;font-weight:400;color:#767489;letter-spacing:-0.277px;">BankingDemo</div>
<div class="t" style="left:641.60px;top:993.70px;font-size:24.80px;line-height:24.80px;font-weight:400;color:#767489;letter-spacing:0.806px;">/</div>
<div class="t" style="left:663.40px;top:993.70px;font-size:24.80px;line-height:24.80px;font-weight:400;color:#767489;letter-spacing:0.200px;">analytics</div>
<div class="t" style="left:774.90px;top:993.70px;font-size:24.80px;line-height:24.80px;font-weight:400;color:#767489;letter-spacing:0.706px;">/</div>
<div class="t" style="left:797.90px;top:993.70px;font-size:24.80px;line-height:24.80px;font-weight:400;color:#767489;letter-spacing:-0.054px;">vw_CustomerAccountTransac...</div>
<svg class="s" style="left:1976px;top:989px;" width="12" height="26" viewBox="0 0 12 26" fill="none"><circle cx="6" cy="4" r="3" fill="#181d27"/><circle cx="6" cy="13" r="3" fill="#181d27"/><circle cx="6" cy="22" r="3" fill="#181d27"/></svg>
<svg class="s" style="left:212px;top:1050px;" width="32" height="31" viewBox="0 0 32 31" fill="none"><rect x="1.5" y="1.5" width="29" height="28" rx="4" fill="#fff" stroke="#181d27" stroke-width="2"/><path d="M1.5 5.5 C1.5 3 3 1.5 5.5 1.5 H26.5 C29 1.5 30.5 3 30.5 5.5 V8.5 H1.5Z" fill="#181d27"/><path d="M2.5 15.5 H29.5 M2.5 22.5 H29.5 M11 8.5 V28.5 M21 8.5 V28.5" stroke="#b7b7b7" stroke-width="1.3"/></svg>
<div class="t" style="left:261.70px;top:1049.87px;font-size:32.40px;line-height:32.40px;font-weight:400;color:#1570ef;letter-spacing:0.031px;">vw_CustomerAccountTransactions</div>
<div class="t" style="left:207.60px;top:1112.46px;font-size:25.20px;line-height:25.20px;font-weight:400;color:#181d27;letter-spacing:0.025px;">No description</div>
<svg class="s" style="left:209px;top:1173px;" width="24" height="24" viewBox="0 0 24 24" fill="none"><g stroke="#717680" stroke-width="1.6"><circle cx="12" cy="12" r="10.5"/><ellipse cx="12" cy="12" rx="4.5" ry="10.5"/><path d="M1.5 12h21M3.5 7h17M3.5 17h17"/></g></svg>
<div class="t" style="left:248.00px;top:1175.55px;font-size:21.20px;line-height:21.20px;font-weight:400;color:#1570ef;letter-spacing:-0.043px;">Customer</div>
<div class="r" style="left:353.5px;top:1183.5px;width:5px;height:5px;background:#78787c;border-radius:50%;"></div>
<div class="r" style="left:370px;top:1169px;width:31px;height:31px;background:#e3f8e3;border:1.5px solid #52c05a;border-radius:50%;"></div>
<div class="t" style="left:381.25px;top:1177.11px;font-size:17.00px;line-height:17.00px;font-weight:400;color:#2a9d34;letter-spacing:0.000px;">J</div>
<div class="r" style="left:412.5px;top:1183.5px;width:5px;height:5px;background:#78787c;border-radius:50%;"></div>
<div class="r" style="left:430.5px;top:1161px;width:110px;height:50px;background:#f0f1f5;border-radius:10px;"></div>
<svg class="s" style="left:445.5px;top:1176.5px;" width="16.0" height="18.0" viewBox="0 0 16 18" fill="none"><g transform="rotate(32 8 9)" stroke="#414651" stroke-width="1.5" stroke-linejoin="round"><path d="M4.6 6.5 L8 2.2 L11.4 6.5 V15 C11.4 15.8 10.9 16.3 10.1 16.3 H5.9 C5.1 16.3 4.6 15.8 4.6 15 Z"/><circle cx="8" cy="6.3" r="1.1" fill="#414651" stroke="none"/></g></svg>
<div class="t" style="left:471.20px;top:1175.22px;font-size:21.00px;line-height:21.00px;font-weight:400;color:#252b37;letter-spacing:0.360px;-webkit-text-stroke:0.25px currentColor;">Tier 3</div>
<div class="r" style="left:552.5px;top:1183.5px;width:5px;height:5px;background:#78787c;border-radius:50%;"></div>
<div class="t" style="left:571.00px;top:1175.30px;font-size:21.50px;line-height:21.50px;font-weight:400;color:#7a7a7c;letter-spacing:-0.012px;">Usage 0th pctile</div>
<div class="r" style="left:173px;top:1279px;width:1857px;height:300px;background:#f8f9fc;border:1px solid #eef0f5;border-radius:20px;"></div>
<div class="r" style="left:208px;top:1318px;width:30px;height:30px;background:#fff;border:2.8px solid #1570ef;border-radius:6px;"></div>
<svg class="s" style="left:252px;top:1315px;" width="37" height="44" viewBox="0 0 37 44" fill="none"><path d="M1 6.5 L12 9.5 L12 34.5 L1 37.5 Z" fill="#e05a4a"/><path d="M0 7 L2.5 6 V38 L0 37Z" fill="#7a2a20"/>
<path d="M25 9.5 L36 6.5 L37 7 V37 L36 37.5 L25 34.5 Z" fill="#8a2b21"/><path d="M34.5 6.8 L37 7 V37 L34.5 37.3Z" fill="#e05a4a"/>
<path d="M12 2 L18.5 0 L25 2 V12.5 L18.5 14.5 L12 12.5 Z" fill="#e05a4a"/><path d="M12 2 L18.5 0 V14.5 L12 12.5Z" fill="#8a2b21"/>
<path d="M12 16.5 L18.5 15.5 L25 16.5 V27 L18.5 28 L12 27 Z" fill="#e05a4a"/><path d="M12 16.5 L18.5 15.5 V28 L12 27Z" fill="#8a2b21"/>
<path d="M12 30.5 L18.5 29.5 L25 30.5 V41 L18.5 43.5 L12 41 Z" fill="#e05a4a"/><path d="M12 30.5 L18.5 29.5 V43.5 L12 41Z" fill="#8a2b21"/>
<path d="M12 12.5 L25 14.5 V16.5 L12 16.5Z" fill="#e05a4a"/><path d="M12 27 L25 27 V30.5 L12 29Z" fill="#8a2b21"/></svg>
<div class="t" style="left:304.50px;top:1324.70px;font-size:24.80px;line-height:24.80px;font-weight:400;color:#767489;letter-spacing:-0.278px;">s3_storage_sample</div>
<div class="t" style="left:531.40px;top:1324.70px;font-size:24.80px;line-height:24.80px;font-weight:400;color:#767489;letter-spacing:-0.794px;">/</div>
<div class="t" style="left:552.80px;top:1324.70px;font-size:24.80px;line-height:24.80px;font-weight:400;color:#767489;letter-spacing:0.074px;">Company departments</div>
<div class="t" style="left:820.00px;top:1324.70px;font-size:24.80px;line-height:24.80px;font-weight:400;color:#767489;letter-spacing:0.106px;">/</div>
<div class="t" style="left:842.30px;top:1324.70px;font-size:24.80px;line-height:24.80px;font-weight:400;color:#767489;letter-spacing:0.120px;">finance</div>
<svg class="s" style="left:1976px;top:1320px;" width="12" height="26" viewBox="0 0 12 26" fill="none"><circle cx="6" cy="4" r="3" fill="#181d27"/><circle cx="6" cy="13" r="3" fill="#181d27"/><circle cx="6" cy="22" r="3" fill="#181d27"/></svg>
<svg class="s" style="left:212px;top:1383px;" width="32" height="30" viewBox="0 0 32 30" fill="none"><g stroke="#181d27" stroke-width="2"><path d="M6 4 H22 L28 10 V28 H6Z"/><path d="M10 10 H20 M10 15 H24 M10 20 H24"/></g></svg>
<div class="t" style="left:262.00px;top:1380.57px;font-size:32.40px;line-height:32.40px;font-weight:400;color:#1570ef;letter-spacing:0.000px;">Finance department</div>
<div class="r" style="left:171px;top:491px;width:189px;height:390px;background:#fff;border-radius:12px;box-shadow:0 6px 16px rgba(0,0,0,0.08),0 3px 6px -4px rgba(0,0,0,0.12),0 9px 28px 8px rgba(0,0,0,0.05);"></div>
<div class="t" style="left:192.50px;top:513.00px;font-size:24.80px;line-height:24.80px;font-weight:400;color:#181d27;letter-spacing:0.000px;">Entity Type</div>
<div class="t" style="left:192.50px;top:567.50px;font-size:24.80px;line-height:24.80px;font-weight:400;color:#181d27;letter-spacing:0.000px;">Domain</div>
<div class="t" style="left:192.50px;top:620.50px;font-size:24.80px;line-height:24.80px;font-weight:400;color:#181d27;letter-spacing:0.000px;">Owners</div>
<div class="t" style="left:192.50px;top:675.00px;font-size:24.80px;line-height:24.80px;font-weight:400;color:#181d27;letter-spacing:0.000px;">Tag</div>
<div class="t" style="left:192.50px;top:728.00px;font-size:24.80px;line-height:24.80px;font-weight:400;color:#181d27;letter-spacing:0.000px;">Tier</div>
<div class="t" style="left:192.50px;top:782.00px;font-size:24.80px;line-height:24.80px;font-weight:400;color:#181d27;letter-spacing:0.000px;">Service</div>
<div class="t" style="left:192.50px;top:836.00px;font-size:24.80px;line-height:24.80px;font-weight:400;color:#181d27;letter-spacing:0.000px;">Service Type</div>
<div class="r" style="left:171px;top:503px;width:189px;height:379px;border:4px solid #0b9cf6;"></div>
</div>
<div class="r" style="left:2112px;top:131px;width:825px;height:1264px;background:#fff;border:1px solid #eceef4;border-radius:20px;"></div>
<div class="r" style="left:2125px;top:738px;width:5px;height:50px;background:#e4e7ec;border-radius:3px;"></div>
<div class="clip" style="left:0;top:0;width:2920px;height:1374px;">
<svg class="s" style="left:2158px;top:169px;" width="30" height="30" viewBox="0 0 32 31" fill="none"><rect x="1.5" y="1.5" width="29" height="28" rx="4" fill="#fff" stroke="#1570ef" stroke-width="2"/><path d="M1.5 5.5 C1.5 3 3 1.5 5.5 1.5 H26.5 C29 1.5 30.5 3 30.5 5.5 V8.5 H1.5Z" fill="#1570ef"/><path d="M2.5 15.5 H29.5 M2.5 22.5 H29.5 M11 8.5 V28.5 M21 8.5 V28.5" stroke="#c0c0c0" stroke-width="1.3"/></svg>
<div class="t" style="left:2207.40px;top:166.41px;font-size:32.00px;line-height:32.00px;font-weight:400;color:#1570ef;letter-spacing:-0.022px;">stg_orders</div>
<div class="r" style="left:2146px;top:231px;width:740px;height:212px;background:#f8f9fc;border:1px solid #eaecf5;border-radius:20px;"></div>
<div class="t" style="left:2174.80px;top:262.53px;font-size:24.30px;line-height:24.30px;font-weight:400;color:#181d27;letter-spacing:0.839px;-webkit-text-stroke:0.83px #181d27;">Type</div>
<div class="t" style="left:2174.80px;top:303.73px;font-size:24.30px;line-height:24.30px;font-weight:400;color:#181d27;letter-spacing:0.438px;-webkit-text-stroke:0.83px #181d27;">Queries</div>
<div class="t" style="left:2174.80px;top:343.03px;font-size:24.30px;line-height:24.30px;font-weight:400;color:#181d27;letter-spacing:0.502px;-webkit-text-stroke:0.83px #181d27;">Columns</div>
<div class="t" style="left:2174.80px;top:384.63px;font-size:24.30px;line-height:24.30px;font-weight:400;color:#181d27;letter-spacing:0.769px;-webkit-text-stroke:0.83px #181d27;">Incidents</div>
<div class="t" style="left:2412.40px;top:262.69px;font-size:24.10px;line-height:24.10px;font-weight:400;color:#2b303b;letter-spacing:0.012px;">View</div>
<div class="t" style="left:2412.40px;top:303.89px;font-size:24.10px;line-height:24.10px;font-weight:400;color:#2b303b;letter-spacing:0.111px;">No Queries</div>
<div class="t" style="left:2412.40px;top:343.19px;font-size:24.10px;line-height:24.10px;font-weight:400;color:#2b303b;letter-spacing:0.000px;">4</div>
<div class="t" style="left:2412.40px;top:384.79px;font-size:24.10px;line-height:24.10px;font-weight:400;color:#1d5bd6;letter-spacing:0.000px;">0</div>
<div class="r" style="left:2146px;top:477px;width:740px;height:142px;background:#f8f9fc;border:1px solid #eaecf5;border-radius:20px;"></div>
<div class="t" style="left:2174.30px;top:514.08px;font-size:24.00px;line-height:24.00px;font-weight:400;color:#181d27;letter-spacing:0.559px;-webkit-text-stroke:0.82px #181d27;">Domain</div>
<svg class="s" style="left:2175px;top:563px;" width="25" height="25" viewBox="0 0 24 24" fill="none"><g stroke="#717680" stroke-width="1.6"><circle cx="12" cy="12" r="10.5"/><ellipse cx="12" cy="12" rx="4.5" ry="10.5"/><path d="M1.5 12h21M3.5 7h17M3.5 17h17"/></g></svg>
<div class="t" style="left:2207.70px;top:563.42px;font-size:24.90px;line-height:24.90px;font-weight:400;color:#414651;letter-spacing:0.061px;">Engineering</div>
<svg class="s" style="left:2350px;top:564px;" width="20" height="22" viewBox="0 0 20 22" fill="none"><g stroke="#1570ef" stroke-width="1.8"><rect x="2" y="2" width="7" height="7" rx="1"/><rect x="11" y="12" width="7" height="7" rx="1"/><path d="M5.5 9 V15.5 H11"/></g></svg>
<div class="r" style="left:2146px;top:653px;width:740px;height:244px;background:#f8f9fc;border:1px solid #eaecf5;border-radius:20px;"></div>
<div class="t" style="left:2174.30px;top:691.48px;font-size:24.00px;line-height:24.00px;font-weight:400;color:#181d27;letter-spacing:0.596px;-webkit-text-stroke:0.82px #181d27;">Data Quality</div>
<div class="r" style="left:2174px;top:735px;width:168px;height:133px;background:#e7f7ef;border-radius:16px;"></div>
<div class="t" style="left:2196.00px;top:767.92px;font-size:21.00px;line-height:21.00px;font-weight:400;color:#181d27;letter-spacing:-0.044px;">Tests Passed</div>
<div class="t" style="left:2249.38px;top:800.35px;font-size:31.00px;line-height:31.00px;font-weight:700;color:#181d27;letter-spacing:0.000px;">3</div>
<div class="r" style="left:2432px;top:735px;width:168px;height:133px;background:#faf0d9;border-radius:16px;"></div>
<div class="t" style="left:2450.60px;top:767.92px;font-size:21.00px;line-height:21.00px;font-weight:400;color:#181d27;letter-spacing:0.347px;">Tests Aborted</div>
<div class="t" style="left:2507.38px;top:800.35px;font-size:31.00px;line-height:31.00px;font-weight:700;color:#181d27;letter-spacing:0.000px;">0</div>
<div class="r" style="left:2691px;top:735px;width:168px;height:133px;background:#f9efef;border-radius:16px;"></div>
<div class="t" style="left:2719.00px;top:767.92px;font-size:21.00px;line-height:21.00px;font-weight:400;color:#181d27;letter-spacing:-0.058px;">Tests Failed</div>
<div class="t" style="left:2766.38px;top:800.35px;font-size:31.00px;line-height:31.00px;font-weight:700;color:#181d27;letter-spacing:0.000px;">0</div>
<div class="r" style="left:2146px;top:931px;width:740px;height:296px;background:#f8f9fc;border:1px solid #eaecf5;border-radius:20px;"></div>
<div class="t" style="left:2174.90px;top:967.18px;font-size:24.00px;line-height:24.00px;font-weight:400;color:#181d27;letter-spacing:0.904px;-webkit-text-stroke:0.82px #181d27;">Tags</div>
<div class="r" style="left:2175px;top:1011px;width:150px;height:51px;background:#f0f1f5;border-radius:8px;"></div>
<svg class="s" style="left:2189px;top:1027px;" width="16.0" height="18.0" viewBox="0 0 16 18" fill="none"><g transform="rotate(32 8 9)" stroke="#414651" stroke-width="1.5" stroke-linejoin="round"><path d="M4.6 6.5 L8 2.2 L11.4 6.5 V15 C11.4 15.8 10.9 16.3 10.1 16.3 H5.9 C5.1 16.3 4.6 15.8 4.6 15 Z"/><circle cx="8" cy="6.3" r="1.1" fill="#414651" stroke="none"/></g></svg>
<div class="t" style="left:2214.80px;top:1026.80px;font-size:21.50px;line-height:21.50px;font-weight:400;color:#181d27;letter-spacing:-0.261px;-webkit-text-stroke:0.25px currentColor;">IPAddress</div>
<div class="r" style="left:2338px;top:1011px;width:137px;height:51px;background:#f0f1f5;border-radius:8px;"></div>
<svg class="s" style="left:2352px;top:1027px;" width="16.0" height="18.0" viewBox="0 0 16 18" fill="none"><g transform="rotate(32 8 9)" stroke="#414651" stroke-width="1.5" stroke-linejoin="round"><path d="M4.6 6.5 L8 2.2 L11.4 6.5 V15 C11.4 15.8 10.9 16.3 10.1 16.3 H5.9 C5.1 16.3 4.6 15.8 4.6 15 Z"/><circle cx="8" cy="6.3" r="1.1" fill="#414651" stroke="none"/></g></svg>
<div class="t" style="left:2378.80px;top:1026.80px;font-size:21.50px;line-height:21.50px;font-weight:400;color:#181d27;letter-spacing:-0.294px;-webkit-text-stroke:0.25px currentColor;">Personal</div>
<div class="r" style="left:2490px;top:1011px;width:145px;height:51px;background:#f0f1f5;border-radius:8px;"></div>
<svg class="s" style="left:2504px;top:1027px;" width="16.0" height="18.0" viewBox="0 0 16 18" fill="none"><g transform="rotate(32 8 9)" stroke="#414651" stroke-width="1.5" stroke-linejoin="round"><path d="M4.6 6.5 L8 2.2 L11.4 6.5 V15 C11.4 15.8 10.9 16.3 10.1 16.3 H5.9 C5.1 16.3 4.6 15.8 4.6 15 Z"/><circle cx="8" cy="6.3" r="1.1" fill="#414651" stroke="none"/></g></svg>
<div class="t" style="left:2529.80px;top:1026.80px;font-size:21.50px;line-height:21.50px;font-weight:400;color:#181d27;letter-spacing:0.355px;-webkit-text-stroke:0.25px currentColor;">restricted</div>
<div class="r" style="left:2649px;top:1011px;width:150px;height:51px;background:#fbeeee;border-left:8px solid #e31b23;border-radius:8px;"></div>
<svg class="s" style="left:2671px;top:1027px;" width="16.0" height="18.0" viewBox="0 0 16 18" fill="none"><g transform="rotate(32 8 9)" stroke="#414651" stroke-width="1.5" stroke-linejoin="round"><path d="M4.6 6.5 L8 2.2 L11.4 6.5 V15 C11.4 15.8 10.9 16.3 10.1 16.3 H5.9 C5.1 16.3 4.6 15.8 4.6 15 Z"/><circle cx="8" cy="6.3" r="1.1" fill="#414651" stroke="none"/></g></svg>
<div class="t" style="left:2698.40px;top:1026.80px;font-size:21.50px;line-height:21.50px;font-weight:400;color:#e31b23;letter-spacing:-0.018px;-webkit-text-stroke:0.25px currentColor;">Sensitive</div>
<div class="r" style="left:2175px;top:1076px;width:143px;height:51px;background:#f0f1f5;border-radius:8px;"></div>
<svg class="s" style="left:2189px;top:1092px;" width="16.0" height="18.0" viewBox="0 0 16 18" fill="none"><g transform="rotate(32 8 9)" stroke="#414651" stroke-width="1.5" stroke-linejoin="round"><path d="M4.6 6.5 L8 2.2 L11.4 6.5 V15 C11.4 15.8 10.9 16.3 10.1 16.3 H5.9 C5.1 16.3 4.6 15.8 4.6 15 Z"/><circle cx="8" cy="6.3" r="1.1" fill="#414651" stroke="none"/></g></svg>
<div class="t" style="left:2214.80px;top:1090.80px;font-size:21.50px;line-height:21.50px;font-weight:400;color:#181d27;letter-spacing:-0.341px;-webkit-text-stroke:0.25px currentColor;">DateTime</div>
<div class="r" style="left:2332px;top:1076px;width:93px;height:51px;background:#f0f1f5;border-radius:8px;"></div>
<svg class="s" style="left:2346px;top:1092px;" width="16.0" height="18.0" viewBox="0 0 16 18" fill="none"><g transform="rotate(32 8 9)" stroke="#414651" stroke-width="1.5" stroke-linejoin="round"><path d="M4.6 6.5 L8 2.2 L11.4 6.5 V15 C11.4 15.8 10.9 16.3 10.1 16.3 H5.9 C5.1 16.3 4.6 15.8 4.6 15 Z"/><circle cx="8" cy="6.3" r="1.1" fill="#414651" stroke="none"/></g></svg>
<div class="t" style="left:2373.30px;top:1090.80px;font-size:21.50px;line-height:21.50px;font-weight:400;color:#181d27;letter-spacing:-2.561px;-webkit-text-stroke:0.25px currentColor;">URL</div>
<div class="t" style="left:2187.50px;top:1161.23px;font-size:21.70px;line-height:21.70px;font-weight:400;color:#1570ef;letter-spacing:-0.062px;">+ 4 More</div>
<div class="r" style="left:2146px;top:1262px;width:740px;height:200px;background:#f8f9fc;border:1px solid #eaecf5;border-radius:20px;"></div>
<div class="t" style="left:2174.90px;top:1298.08px;font-size:24.00px;line-height:24.00px;font-weight:400;color:#181d27;letter-spacing:0.905px;-webkit-text-stroke:0.82px #181d27;">Description</div>
<div class="t" style="left:2174.90px;top:1347.22px;font-size:24.90px;line-height:24.90px;font-weight:400;color:#181d27;letter-spacing:-0.052px;">This table stores order details, including customer IDs, order</div>
</div>
<div class="r" style="left:2920px;top:231px;width:17px;height:497px;background:#c8d5de;border-radius:9px;"></div>
<div class="r" style="left:2935px;top:1129px;width:12px;height:82px;background:#fff;border-radius:8px 0 0 8px;box-shadow:-3px 0 10px rgba(0,0,0,0.09);"></div>
<div class="r" style="left:0px;top:1330px;width:2943px;height:66px;background:linear-gradient(to bottom, rgba(200,203,212,0) 0%, rgba(200,203,212,0.10) 100%);"></div>
<div class="r" style="left:0px;top:1396px;width:2943px;height:21px;background:linear-gradient(to bottom, #f1f2f5 0%, #eaebef 50%, #e0e1e6 100%);"></div>
<div class="r" style="left:0px;top:1417px;width:2943px;height:7px;background:#fff;"></div>
<div class="r" style="left:117px;top:1415px;width:561px;height:2px;background:#a6d3f6;"></div>
<div class="r" style="left:2836px;top:1287px;width:99px;height:99px;border-radius:50%;background:radial-gradient(circle, rgba(21,112,239,0.25) 40%, rgba(21,112,239,0) 70%);"></div>
<div class="r" style="left:2844px;top:1295px;width:83px;height:83px;background:#0b4fc6;border:4px solid #fff;border-radius:50%;box-shadow:0 0 8px rgba(21,112,239,0.35);"></div>
<svg class="s" style="left:2850px;top:1300px;" width="72" height="72" viewBox="2850 1300 72 72" fill="none"><path d="M2885.7 1316 V1325" stroke="#fff" stroke-width="2.2"/><circle cx="2885.7" cy="1315.5" r="2.6" fill="#fff"/><rect x="2865" y="1324" width="41.5" height="32" rx="11" fill="#fff"/><rect x="2861.5" y="1333" width="7" height="13" rx="3.5" fill="#fff"/><rect x="2903" y="1333" width="7" height="13" rx="3.5" fill="#fff"/><path d="M2883 1354 L2893 1354 L2887 1361.5Z" fill="#fff"/><rect x="2870.5" y="1331" width="31" height="17.5" rx="6" fill="#cde5ff"/><circle cx="2878.5" cy="1340" r="2.1" fill="#0b4fc6"/><circle cx="2893.5" cy="1340" r="2.1" fill="#0b4fc6"/></svg>
</body></html>
